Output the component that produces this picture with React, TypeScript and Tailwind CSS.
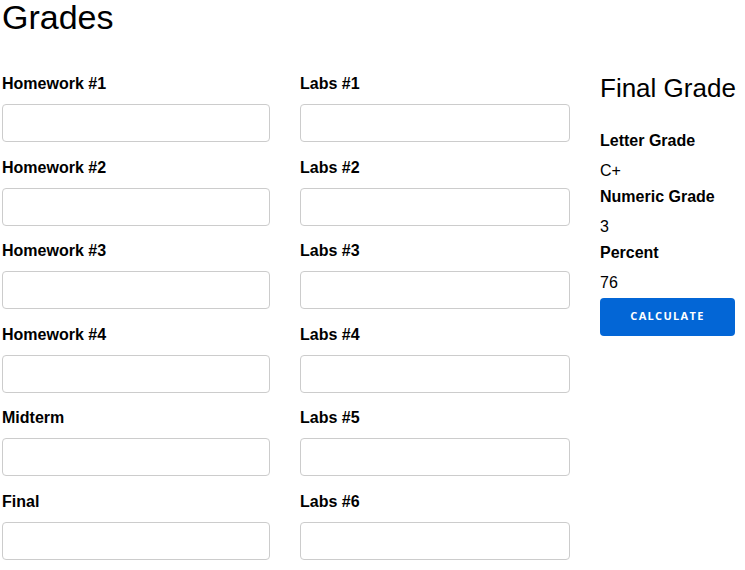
const leftFields = ['Homework #1', 'Homework #2', 'Homework #3', 'Homework #4', 'Midterm', 'Final'];
const labFields = ['Labs #1', 'Labs #2', 'Labs #3', 'Labs #4', 'Labs #5', 'Labs #6'];

function Field({ label }: { label: string }) {
  return (
    <div className="flex flex-col">
      <label className="text-base leading-[20px] font-bold text-black mb-[10px]">{label}</label>
      <input
        type="text"
        className="h-[38px] w-full rounded-[4px] border border-[#cccccc] bg-white px-2 outline-none"
      />
    </div>
  );
}

function Result({ label, value }: { label: string; value: string }) {
  return (
    <div className="flex flex-col">
      <div className="text-base leading-[20px] font-bold text-black">{label}</div>
      <div className="text-base leading-[20px] text-black mt-[10px]">{value}</div>
    </div>
  );
}

export default function App() {
  return (
    <div
      className="min-h-screen bg-white pl-[2px] pr-[10px] pt-[1px] text-black"
      style={{ fontFamily: '"Liberation Sans", Arial, sans-serif' }}
    >
      <h1 className="text-[34px] leading-[32px] font-normal">Grades</h1>

      <div className="mt-[41px] grid grid-cols-[268px_270px_135px] gap-x-[30px]">
        <div className="flex flex-col gap-y-[15.6px]">
          {leftFields.map((f) => (
            <Field key={f} label={f} />
          ))}
        </div>
        <div className="flex flex-col gap-y-[15.6px]">
          {labFields.map((f) => (
            <Field key={f} label={f} />
          ))}
        </div>
        <div className="flex flex-col">
          <h2 className="-mt-[1px] text-[26px] leading-[30px] font-normal whitespace-nowrap">Final Grade</h2>
          <div className="mt-[27.5px] flex flex-col gap-y-[6px]">
            <Result label="Letter Grade" value="C+" />
            <Result label="Numeric Grade" value="3" />
            <Result label="Percent" value="76" />
          </div>
          <button
            className="mt-[5px] h-[38px] w-full rounded-[4px] bg-[#0366d6] text-white text-[11px] font-bold uppercase tracking-[0.12em]"
            style={{ fontFamily: '"Open Sans", sans-serif' }}
          >
            Calculate
          </button>
        </div>
      </div>
    </div>
  );
}
